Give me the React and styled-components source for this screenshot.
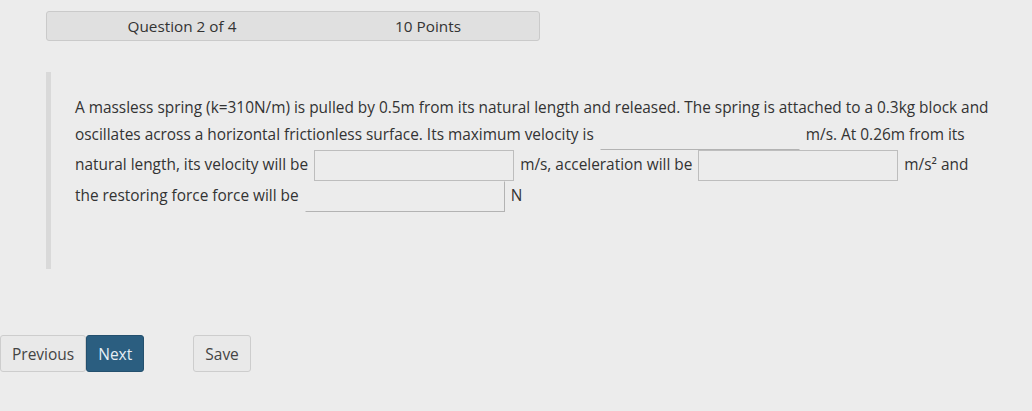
import React from 'react';
import styled, { createGlobalStyle } from 'styled-components';

const GlobalStyle = createGlobalStyle`
  body {
    margin: 0;
    background: #ececec;
    font-family: "Open Sans", "Liberation Sans", sans-serif;
    color: #333;
  }
`;

const Page = styled.main`
  width: 1032px;
  height: 411px;
  padding-top: 11px;
  box-sizing: border-box;
  overflow: hidden;
`;

const Header = styled.div`
  display: grid;
  grid-template-columns: 246px 246px;
  align-items: center;
  margin-left: 46px;
  width: 494px;
  height: 30px;
  box-sizing: border-box;
  padding-left: 12px;
  background: #e0e0e0;
  border: 1px solid #cacaca;
  border-radius: 3px;
  font-size: 15.3px;
`;

const HeaderCell = styled.span`
  text-align: center;
`;

const Question = styled.section`
  margin: 31px 0 0 46px;
  width: 947px;
  height: 197px;
  box-sizing: border-box;
  border-left: 5px solid #d9d9d9;
  padding: 23px 0 0 24px;
  font-size: 15.4px;
  line-height: 26px;
`;

const Blank = styled.input`
  width: 200px;
  height: ${p => p.$edges === 'bottom' ? 29 : 31}px;
  box-sizing: border-box;
  margin: 0 2px;
  padding: 0 6px;
  vertical-align: middle;
  background: transparent;
  font: inherit;
  border: 1px solid transparent;
  border-color: ${p => p.$edges === 'bottom' ? 'transparent transparent #b3b3b3 transparent'
    : p.$edges === 'corner' ? 'transparent #b3b3b3 #b3b3b3 transparent'
    : '#bdbdbd'};
  outline: none;
`;

const Nav = styled.nav`
  display: flex;
  align-items: center;
  margin-top: 66px;
`;

const Button = styled.button`
  height: 37px;
  margin: 0 0 0 ${p => p.$gap || 0}px;
  padding: 0 11px;
  font-family: "Open Sans", "Liberation Sans", sans-serif;
  font-size: 15.5px;
  border-radius: 3px;
  cursor: pointer;
  background: ${p => p.$primary ? '#2b5e80' : '#e9e9e9'};
  color: ${p => p.$primary ? '#e6eef5' : '#444'};
  border: 1px solid ${p => p.$primary ? '#24506e' : '#cdcdcd'};
`;

export default function App() {
  return (
    <Page>
      <GlobalStyle />
      <Header>
        <HeaderCell>Question 2 of 4</HeaderCell>
        <HeaderCell>10 Points</HeaderCell>
      </Header>
      <Question>
        A massless spring (k=310N/m) is pulled by 0.5m from its natural length and released. The spring is attached to a 0.3kg block and
        oscillates across a horizontal frictionless surface. Its maximum velocity is <Blank $edges="bottom" /> m/s. At 0.26m from its
        natural length, its velocity will be <Blank /> m/s, acceleration will be <Blank /> m/s² and
        the restoring force force will be <Blank $edges="corner" /> N
      </Question>
      <Nav>
        <Button>Previous</Button>
        <Button $primary>Next</Button>
        <Button $gap={49}>Save</Button>
      </Nav>
    </Page>
  );
}
